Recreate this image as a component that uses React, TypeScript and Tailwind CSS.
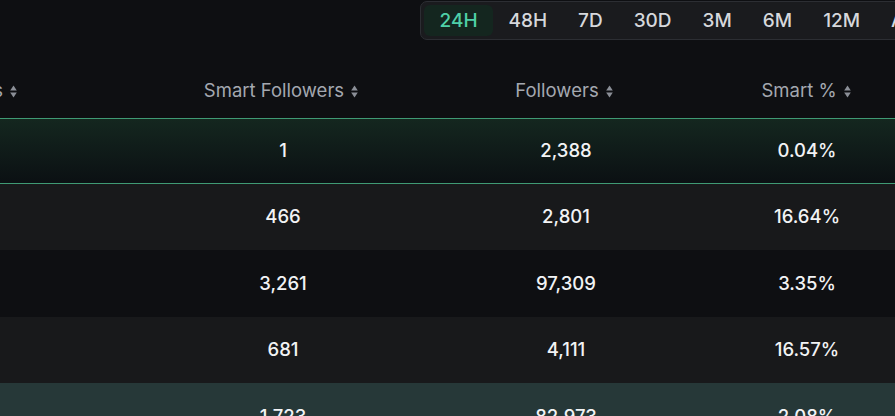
import React from 'react';

const ranges = ['24H', '48H', '7D', '30D', '3M', '6M', '12M', 'ALL'];

type Row = { smart: string; followers: string; pct: string };

const rows: Row[] = [
  { smart: '1', followers: '2,388', pct: '0.04%' },
  { smart: '466', followers: '2,801', pct: '16.64%' },
  { smart: '3,261', followers: '97,309', pct: '3.35%' },
  { smart: '681', followers: '4,111', pct: '16.57%' },
  { smart: '1,723', followers: '82,973', pct: '2.08%' },
];

// 각 행 배경 + 높이
const rowStyles = [
  'h-[66px] bg-gradient-to-b from-[#14271f] to-[#0b1013] border-y border-[#3f9a74]',
  'h-[66px] bg-[#18191b]',
  'h-[67px] bg-[#0e0f12]',
  'h-[66px] bg-[#18191b]',
  'h-[67px] bg-[#263838]',
];

function SortIcon() {
  return (
    <svg width="7" height="13" viewBox="0 0 7 13" className="shrink-0">
      <path d="M3.5 0.5 L6.8 5.6 L0.2 5.6 Z" fill="#8b8f97" />
      <path d="M0.2 7.4 L6.8 7.4 L3.5 12.5 Z" fill="#8b8f97" />
    </svg>
  );
}

function HeaderCell({ label, className }: { label: string; className: string }) {
  return (
    <div className={`flex shrink-0 items-center gap-[7px] whitespace-nowrap ${className}`}>
      <span>{label}</span>
      <SortIcon />
    </div>
  );
}

export default function App() {
  return (
    <div className="w-[895px] h-[416px] overflow-hidden bg-[#0e0f12] font-['Inter','Liberation_Sans',sans-serif]">
      {/* 기간 선택 탭 */}
      <div className="h-[60px] pt-px pl-[420px]">
        <div className="flex w-max rounded-[7px] border border-[#2c2e33] bg-[#1a1b1e] p-[3px]">
          {ranges.map((r) => (
            <div
              key={r}
              className={`h-[31px] px-[15.5px] flex items-center text-[19px] font-medium leading-none ${
                r === '24H' ? 'bg-[#14261f] text-[#4fd0a8] rounded-[6px]' : 'text-[#d6d8dc]'
              }`}
            >
              {r}
            </div>
          ))}
        </div>
      </div>

      {/* 테이블 헤더 */}
      <div className="flex h-[58px] items-center pt-[4px] text-[18.5px] text-[#a4a8b0]">
        <div className="w-[140px] shrink-0 pr-[123px] flex justify-end">
          <HeaderCell label="Mentions" className="justify-end" />
        </div>
        <HeaderCell label="Smart Followers" className="w-[282px] justify-center" />
        <HeaderCell label="Followers" className="w-[284px] justify-center" />
        <HeaderCell label="Smart %" className="w-[200px] justify-center" />
      </div>

      {/* 테이블 본문 */}
      {rows.map((row, i) => (
        <div key={i} className={`flex items-center text-[18.5px] font-medium text-[#f2f3f5] ${rowStyles[i]}`}>
          <div className="w-[140px] shrink-0" />
          <div className="w-[282px] shrink-0 pl-[4px] text-center">{row.smart}</div>
          <div className="w-[284px] shrink-0 pl-[4px] text-center">{row.followers}</div>
          <div className="w-[200px] shrink-0 pl-[2px] text-center">{row.pct}</div>
        </div>
      ))}
    </div>
  );
}
